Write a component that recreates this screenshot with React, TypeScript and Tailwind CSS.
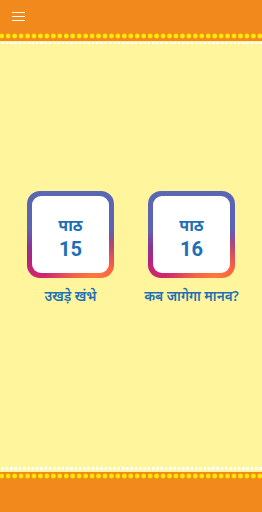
import React from "react";

const dotsBg =
  "bg-[radial-gradient(circle,#ffea00_0,#ffea00_2px,rgba(255,234,0,0)_2.8px)] bg-[length:6.46px_6px] bg-[position:-1.5px_0]";
const squaresBg =
  "bg-[linear-gradient(90deg,#ffffff_0,#ffffff_2.2px,transparent_2.2px)] bg-[length:4.3px_3px] bg-[position:1.5px_0]";

function Card({ num, title }: { num: string; title: string }) {
  return (
    <div className="flex flex-col items-center w-[87px]">
      <div className="w-[87px] h-[87px] rounded-[13px] p-[5px] bg-[radial-gradient(circle_at_78%_102%,#ff7a3a_0%,rgba(255,110,60,0.85)_18%,rgba(255,110,60,0)_45%),linear-gradient(180deg,#5867b6_0%,#5f62b0_45%,#8a3596_64%,#b5217f_80%,#d2286d_100%)]">
        <div className="w-full h-full bg-white rounded-[9px] flex flex-col items-center justify-center text-[#1d70b5] font-bold">
          <div className="text-[16px] leading-[20px] mt-[6px]">पाठ</div>
          <div className="text-[20px] leading-[22px] mt-[3px] font-['Roboto']">{num}</div>
        </div>
      </div>
      <div className="mt-[9px] text-[13.5px] leading-[18px] font-semibold text-[#1d70b5] whitespace-nowrap">
        {title}
      </div>
    </div>
  );
}

export default function App() {
  return (
    <div
      className="w-[262px] h-[512px] flex flex-col bg-[#fff59d] overflow-hidden"
      style={{ fontFamily: '"Noto Sans", "Noto Sans Devanagari", Roboto, sans-serif' }}
    >
      <div className="h-[41px] bg-[#f2891d] flex flex-col shrink-0">
        <div className="h-[33px] flex items-center pl-[12px]">
          <div className="flex flex-col gap-[2.5px] w-[13px]">
            <div className="h-[1.5px] bg-white" />
            <div className="h-[1.5px] bg-white" />
            <div className="h-[1.5px] bg-white" />
          </div>
        </div>
        <div className={`h-[6px] ${dotsBg}`} />
      </div>
      <div className={`h-[2px] mt-[1px] ${squaresBg}`} />
      <div className="flex-1 flex justify-center items-start pt-[147px] gap-[34px]">
        <Card num="15" title="उखड़े खंभे" />
        <Card num="16" title="कब जागेगा मानव?" />
      </div>
      <div className={`h-[3px] mb-[2px] ${squaresBg}`} />
      <div className="h-[40px] bg-[#f2891d] shrink-0 pt-[1px]">
        <div className={`h-[6px] ${dotsBg}`} />
      </div>
    </div>
  );
}
